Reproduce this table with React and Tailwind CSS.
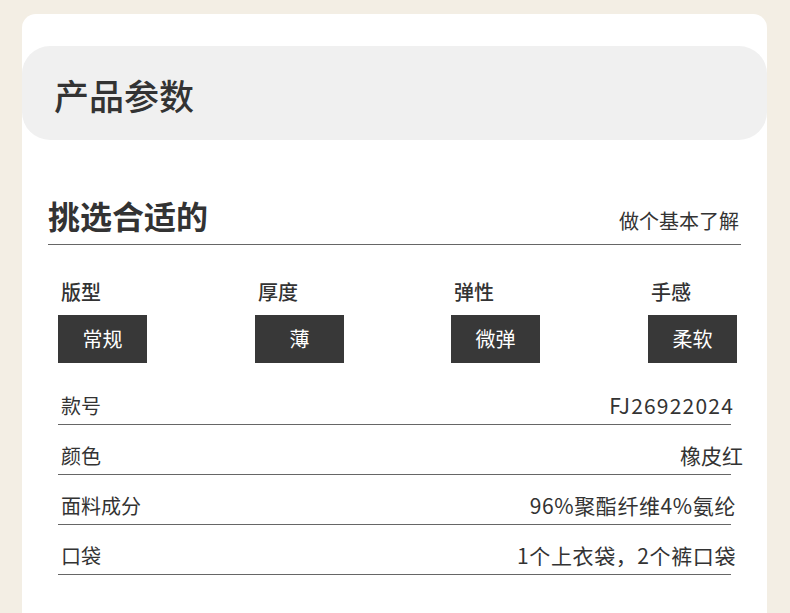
const attrs = [
  { label: "版型", value: "常规" },
  { label: "厚度", value: "薄" },
  { label: "弹性", value: "微弹" },
  { label: "手感", value: "柔软" },
];

const specs = [
  { name: "款号", value: "FJ26922024", cls: "tracking-[1.2px] -mr-[3px]" },
  { name: "颜色", value: "橡皮红", cls: "-mr-[12px]" },
  { name: "面料成分", value: "96%聚酯纤维4%氨纶", cls: "tracking-[0.6px] -mr-[5px]" },
  { name: "口袋", value: "1个上衣袋，2个裤口袋", cls: "tracking-[0.6px] -mr-[5px]" },
];

const App = () => {
  return (
    <div
      className="min-h-[613px] bg-[#f3eee4] pl-[22px] pr-[23px] pt-[14px] text-[#333]"
      style={{ fontFamily: '"Noto Sans CJK SC", "Noto Sans", sans-serif' }}
    >
      <div className="h-[599px] rounded-t-[14px] bg-white pt-[32px]">
        <div className="flex h-[94px] items-center rounded-[28px] bg-[#f0f0f0] pl-[32px] pt-[4px]">
          <h1 className="text-[35px] font-medium leading-[44px]">产品参数</h1>
        </div>

        <div className="mx-[26px] mt-[55px] flex items-end justify-between border-b border-[#666] pb-[9px]">
          <h2 className="text-[32px] font-bold leading-[40px]">挑选合适的</h2>
          <span className="mr-[2px] text-[20px] leading-[28px]">做个基本了解</span>
        </div>

        <div className="ml-[36px] mt-[33px] grid grid-cols-[197px_196px_197px_89px]">
          {attrs.map((a) => (
            <div key={a.label} className="flex flex-col">
              <span className="pl-[3px] text-[20px] font-medium leading-[28px]">{a.label}</span>
              <div className="mt-[9px] flex h-[48px] w-[89px] items-center justify-center bg-[#383838] text-[20px] leading-[28px] text-white">
                {a.value}
              </div>
            </div>
          ))}
        </div>

        <div className="mx-[36px] mt-[12px]">
          {specs.map((s) => (
            <div
              key={s.name}
              className="flex items-center justify-between border-b border-[#666] pb-[4px] pt-[16px]"
            >
              <span className="pl-[3px] text-[20px] leading-[29px]">{s.name}</span>
              <span className={`text-[21px] leading-[29px] ${s.cls}`}>{s.value}</span>
            </div>
          ))}
        </div>
      </div>
    </div>
  );
};

export default App;
